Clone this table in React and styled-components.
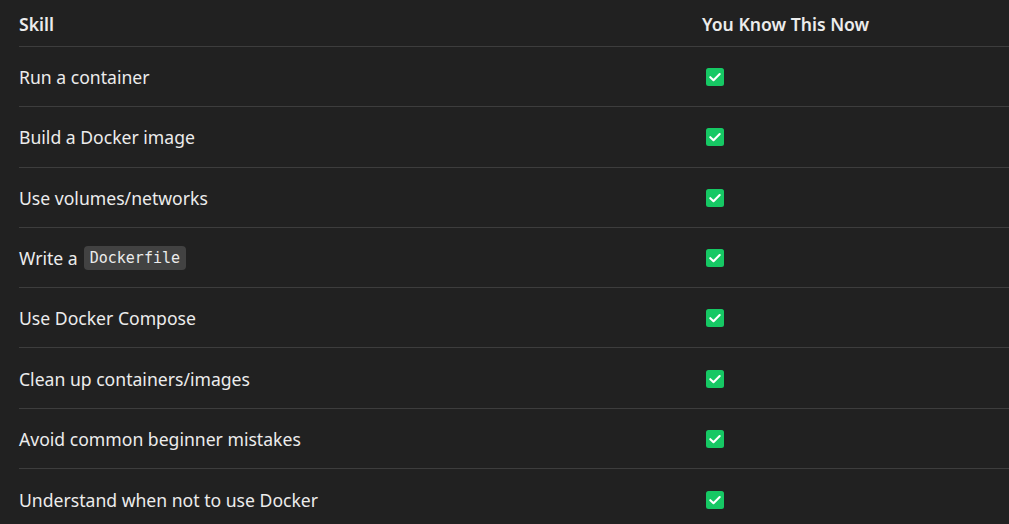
import React from 'react';
import styled, { createGlobalStyle } from 'styled-components';

const GlobalStyle = createGlobalStyle`
  html, body {
    margin: 0;
    padding: 0;
    background: #212121;
    overflow: hidden;
  }
  body {
    font-family: "Noto Sans", "Open Sans", sans-serif;
    color: #ececec;
  }
`;

const TableWrap = styled.div`
  padding-left: 19px;
`;

const Row = styled.div`
  display: grid;
  grid-template-columns: 683px 1fr;
  align-items: center;
  height: ${(p) => (p.$head ? '47px' : '60.3px')};
  border-bottom: ${(p) => (p.$last ? 'none' : '1px solid #3d3d3d')};
  box-sizing: border-box;
  font-size: 17.6px;
  font-weight: ${(p) => (p.$head ? 600 : 400)};
  padding-top: ${(p) => (p.$head ? '1px' : '1px')};
`;

const Cell = styled.div`
  display: flex;
  align-items: center;
  gap: 6px;
  white-space: nowrap;
`;

const Code = styled.code`
  font-family: "DejaVu Sans Mono", monospace;
  font-size: 15px;
  line-height: 18px;
  background: #424242;
  border-radius: 4px;
  padding: 3px 6px;
  color: #ececec;
`;

const CheckBox = styled.span`
  display: inline-flex;
  margin-left: 4px;
`;

const Check = () => (
  <CheckBox>
    <svg width="18" height="18" viewBox="0 0 18 18">
      <rect x="0" y="0" width="18" height="18" rx="2.5" fill="#16c864" />
      <path d="M4.3 9.2 L7.5 12.2 L13.7 6" fill="none" stroke="#fff" strokeWidth="2.1" strokeLinecap="round" strokeLinejoin="round" />
    </svg>
  </CheckBox>
);

const skills = [
  'Run a container',
  'Build a Docker image',
  'Use volumes/networks',
  'DOCKERFILE',
  'Use Docker Compose',
  'Clean up containers/images',
  'Avoid common beginner mistakes',
  'Understand when not to use Docker',
];

export default function App() {
  return (
    <>
      <GlobalStyle />
      <TableWrap>
        <Row $head>
          <Cell>Skill</Cell>
          <Cell>You Know This Now</Cell>
        </Row>
        {skills.map((s, i) => (
          <Row key={i} $last={i === skills.length - 1}>
            <Cell>
              {s === 'DOCKERFILE' ? (
                <>
                  Write a <Code>Dockerfile</Code>
                </>
              ) : (
                s
              )}
            </Cell>
            <Cell>
              <Check />
            </Cell>
          </Row>
        ))}
      </TableWrap>
    </>
  );
}
